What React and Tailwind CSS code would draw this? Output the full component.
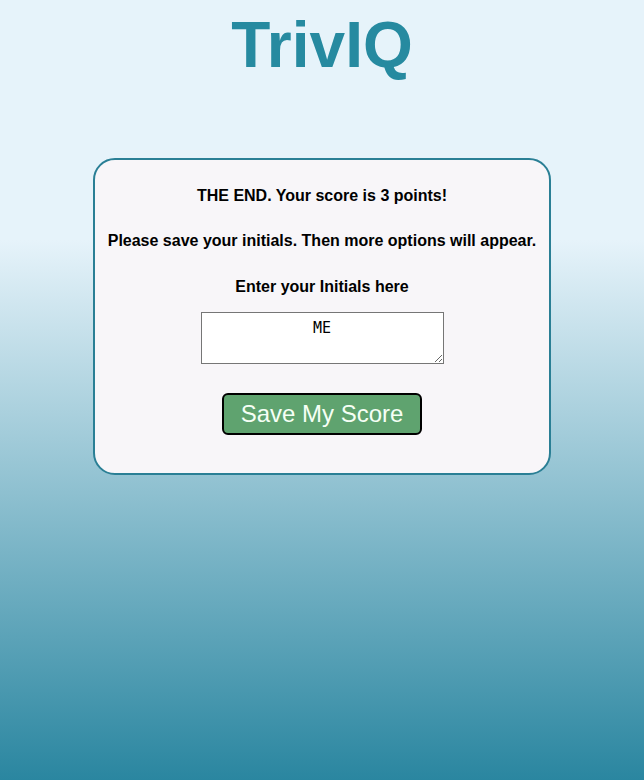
export default function App() {
  return (
    <div className="min-h-[780px] bg-[linear-gradient(to_bottom,#e6f3fa_0px,#e6f3fa_240px,#2a86a0_780px)] font-['Liberation_Sans',Arial,sans-serif] text-black">
      <h1 className="pt-[8px] text-center text-[64px] font-bold leading-[74px] text-[#268aa0]">
        TrivIQ
      </h1>

      <div className="mx-auto mt-[76px] w-[458px] rounded-[22px] border-2 border-[#2a7f95] bg-[#f8f6f9] pb-[38px] pt-[27px] text-center">
        <p className="text-base font-bold leading-[18px]">
          THE END. Your score is 3 points!
        </p>
        <p className="mt-[27px] whitespace-nowrap text-base font-bold leading-[18px]">
          Please save your initials. Then more options will appear.
        </p>
        <p className="mt-[28px] text-base font-bold leading-[18px]">
          Enter your Initials here
        </p>
        <textarea
          defaultValue="ME"
          className="mx-auto mt-[16px] block h-[52px] w-[243px] border border-[#767676] bg-white px-[2px] pb-[2px] pt-[6px] text-center font-['DejaVu_Sans_Mono',monospace] text-[15px] leading-[18px]"
        />
        <button className="mt-[29px] rounded-[6px] border-2 border-black bg-[#5fa36f] px-[17px] py-[5px] text-[24px] leading-[28px] text-[#f5fff5]">
          Save My Score
        </button>
      </div>
    </div>
  );
}
